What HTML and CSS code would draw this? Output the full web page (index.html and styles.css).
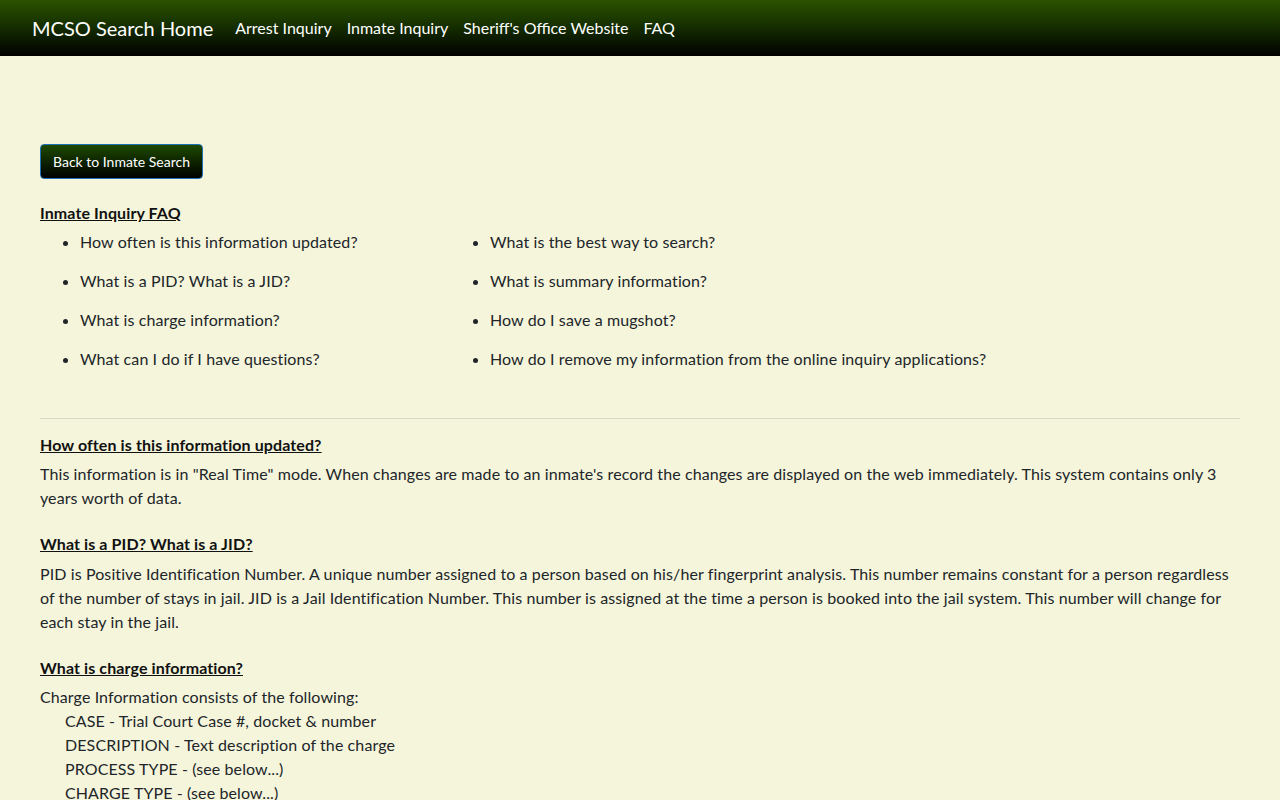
FILE: index.html
```html
<!DOCTYPE html>
<html lang="en">
<head>
<meta charset="utf-8">
<title>Inmate Inquiry FAQ</title>
<link rel="stylesheet" href="styles.css">
</head>
<body>
<nav class="navbar">
  <a class="brand" href="#">MCSO Search Home</a>
  <ul class="nav-links">
    <li><a href="#">Arrest Inquiry</a></li>
    <li><a href="#">Inmate Inquiry</a></li>
    <li><a href="#">Sheriff's Office Website</a></li>
    <li><a href="#">FAQ</a></li>
  </ul>
</nav>
<main class="container">
  <button class="btn-back" type="button">Back to Inmate Search</button>
  <h2 class="faq-title">Inmate Inquiry FAQ</h2>
  <div class="faq-index">
    <ul class="faq-col">
      <li>How often is this information updated?</li>
      <li>What is a PID? What is a JID?</li>
      <li>What is charge information?</li>
      <li>What can I do if I have questions?</li>
    </ul>
    <ul class="faq-col">
      <li>What is the best way to search?</li>
      <li>What is summary information?</li>
      <li>How do I save a mugshot?</li>
      <li>How do I remove my information from the online inquiry applications?</li>
    </ul>
  </div>
  <hr class="divider">
  <section class="faq-item">
    <h3 class="q">How often is this information updated?</h3>
    <p class="a">This information is in "Real Time" mode. When changes are made to an inmate's record the changes are displayed on the web immediately. This system contains only 3 years worth of data.</p>
  </section>
  <section class="faq-item faq-item-pid">
    <h3 class="q">What is a PID? What is a JID?</h3>
    <p class="a">PID is Positive Identification Number. A unique number assigned to a person based on his/her fingerprint analysis. This number remains constant for a person regardless of the number of stays in jail. JID is a Jail Identification Number. This number is assigned at the time a person is booked into the jail system. This number will change for each stay in the jail.</p>
  </section>
  <section class="faq-item">
    <h3 class="q">What is charge information?</h3>
    <div class="a">
      <div>Charge Information consists of the following:</div>
      <div class="indent">CASE - Trial Court Case #, docket &amp; number</div>
      <div class="indent">DESCRIPTION - Text description of the charge</div>
      <div class="indent">PROCESS TYPE - (see below...)</div>
      <div class="indent">CHARGE TYPE - (see below...)</div>
    </div>
  </section>
</main>
</body>
</html>
```
FILE: styles.css
```css
html, body {
  margin: 0;
  padding: 0;
}
body {
  background: #f5f5dc;
  color: #212529;
  font-family: "Lato", "Open Sans", sans-serif;
  font-size: 16px;
  line-height: 24px;
  letter-spacing: 0.1px;
}
.navbar {
  height: 56px;
  box-sizing: border-box;
  display: flex;
  align-items: center;
  padding: 0 32px;
  background: linear-gradient(to bottom, #2b5300 0%, #163000 45%, #000000 100%);
  font-family: "Lato", sans-serif;
  letter-spacing: 0;
}
.brand {
  color: #ffffff;
  font-size: 20px;
  text-decoration: none;
  margin-right: 22px;
}
.nav-links {
  list-style: none;
  display: flex;
  gap: 15px;
  margin: 0;
  padding: 0;
}
.nav-links a {
  color: #ffffff;
  text-decoration: none;
  font-size: 16px;
}
.container {
  padding: 88px 40px 0;
}
.btn-back {
  display: block;
  height: 35px;
  padding: 0 12px;
  border: 1px solid #1f6fb8;
  border-radius: 4px;
  background: linear-gradient(to bottom, #1e4a00 0%, #0c2000 55%, #000000 100%);
  color: #ffffff;
  font-family: inherit;
  font-size: 14px;
  letter-spacing: 0;
  cursor: pointer;
}
.faq-title {
  margin: 22px 0 0;
  font-size: 16px;
  font-weight: 700;
  text-decoration: underline;
  line-height: 24px;
  color: #111111;
}
.faq-index {
  display: grid;
  grid-template-columns: 410px 1fr;
}
.faq-col {
  margin: 5px 0 0;
  padding-left: 40px;
}
.faq-col li {
  margin-bottom: 15px;
}
.divider {
  margin: 32px 0 14px;
  border: 0;
  border-top: 1px solid #d8d8c8;
}
.faq-item {
  margin-bottom: 22px;
}
.q {
  margin: 0 0 5px;
  font-size: 16px;
  font-weight: 700;
  text-decoration: underline;
  line-height: 24px;
  color: #111111;
}
.faq-item-pid .q {
  margin-bottom: 6px;
}
.a {
  margin: 0;
}
.indent {
  padding-left: 25px;
}
```
